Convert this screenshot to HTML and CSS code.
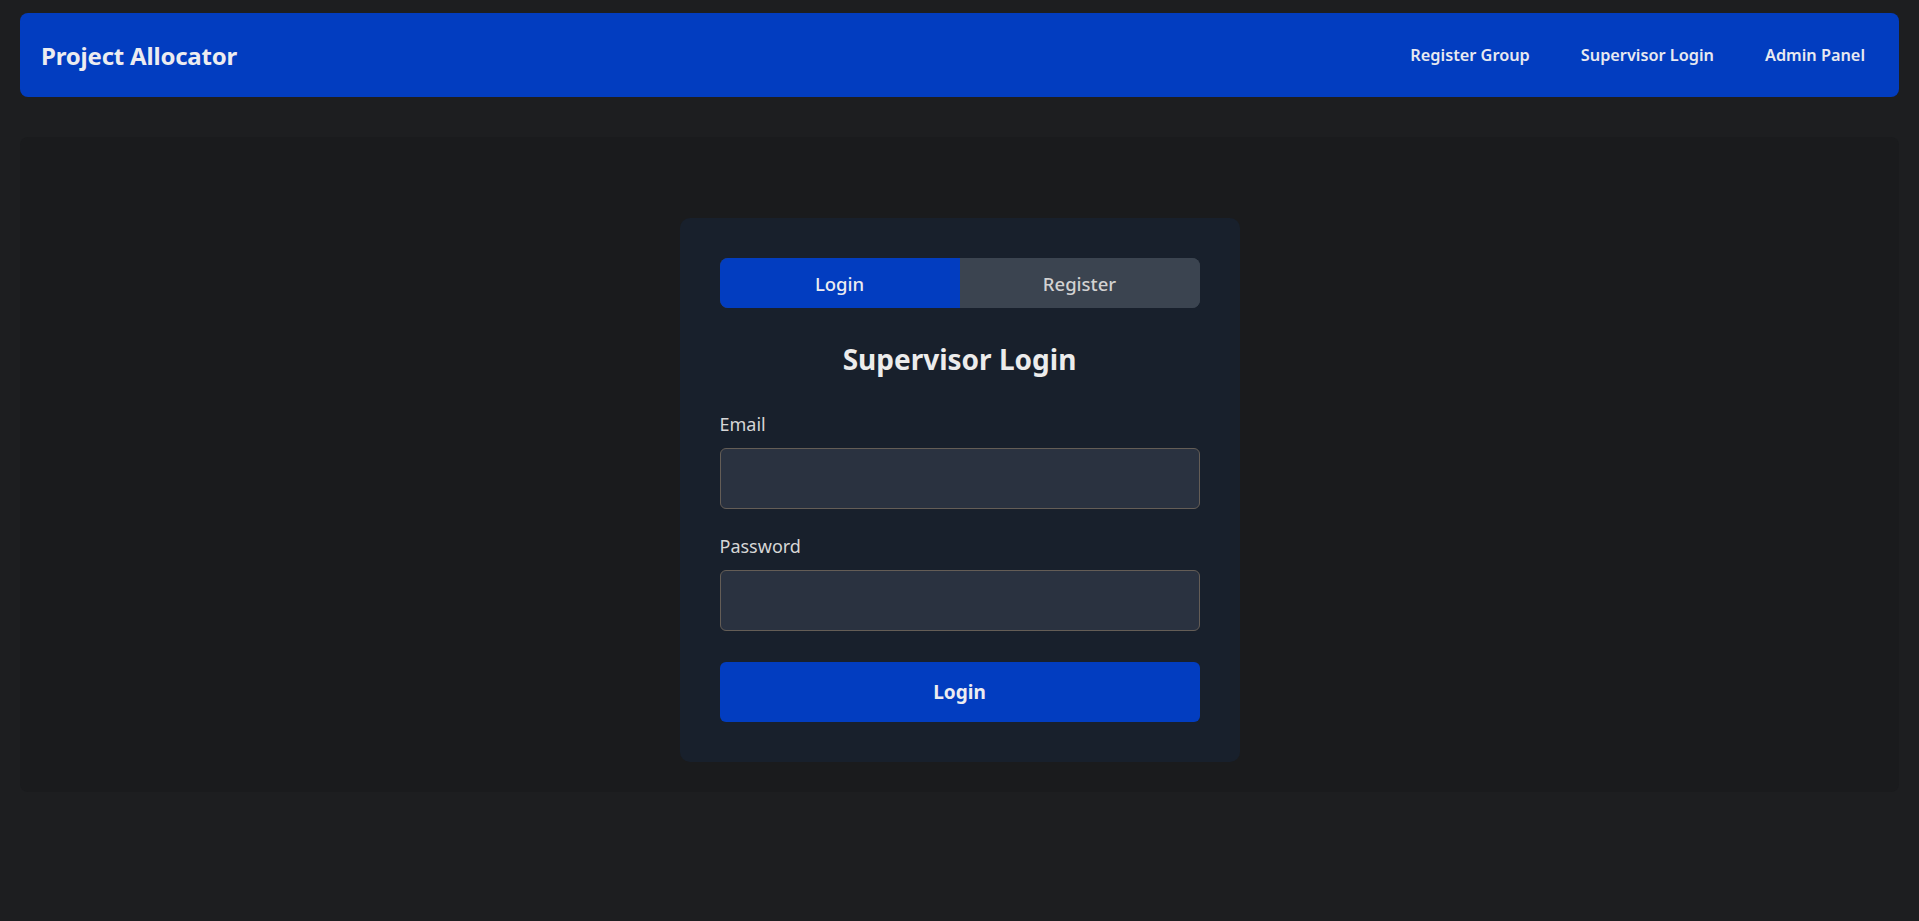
FILE: index.html
```html
<!DOCTYPE html>
<html lang="en">
<head>
<meta charset="utf-8">
<title>Project Allocator</title>
<link rel="stylesheet" href="styles.css">
</head>
<body>
<nav class="navbar">
  <a class="brand" href="#">Project Allocator</a>
  <ul class="nav-links">
    <li><a href="#">Register Group</a></li>
    <li><a href="#">Supervisor Login</a></li>
    <li><a href="#">Admin Panel</a></li>
  </ul>
</nav>
<main class="container">
  <section class="card">
    <div class="tabs">
      <button class="tab active" type="button">Login</button>
      <button class="tab" type="button">Register</button>
    </div>
    <h2 class="title">Supervisor Login</h2>
    <form class="form">
      <div class="field">
        <label for="email">Email</label>
        <input id="email" type="email">
      </div>
      <div class="field">
        <label for="password">Password</label>
        <input id="password" type="password">
      </div>
      <button class="submit" type="button">Login</button>
    </form>
  </section>
</main>
</body>
</html>
```

FILE: styles.css
```css
* { box-sizing: border-box; }

html, body {
  margin: 0;
  padding: 0;
}

body {
  background: #1d1e20;
  color: #e6e6e6;
  font-family: "Segoe UI", "Noto Sans", "Open Sans", sans-serif;
  padding: 13px 20px 0;
}

.navbar {
  display: flex;
  align-items: center;
  justify-content: space-between;
  height: 84px;
  background: #023dc0;
  border-radius: 8px;
  padding: 0 17px 0 21px;
}

.brand {
  color: #ececf0;
  font-size: 24px;
  font-weight: 700;
  text-decoration: none;
  letter-spacing: -0.2px;
}

.nav-links {
  list-style: none;
  display: flex;
  gap: 17px;
  margin: 0;
  padding: 0;
}

.nav-links a {
  display: block;
  padding: 8px 17px;
  color: #e8e9f0;
  font-size: 16.3px;
  font-weight: 600;
  text-decoration: none;
}

.container {
  margin-top: 40px;
  background: #1a1b1d;
  border-radius: 8px;
  padding: 81px 0 30px;
}

.card {
  width: 560px;
  margin: 0 auto;
  background: #18202c;
  border-radius: 10px;
  padding: 40px;
}

.tabs {
  display: flex;
  height: 50px;
  border-radius: 8px;
  overflow: hidden;
  background: #3b4450;
}

.tab {
  flex: 1;
  border: 0;
  background: #3b4450;
  color: #d2d2d2;
  font-family: inherit;
  font-size: 18.5px;
  font-weight: 500;
  cursor: pointer;
}

.tab.active {
  background: #023dc0;
  color: #ececf0;
}

.title {
  margin: 33px 0 0;
  text-align: center;
  font-size: 28px;
  line-height: 36px;
  font-weight: 700;
  color: #ececec;
}

.form {
  margin-top: 35px;
}

.field + .field {
  margin-top: 25px;
}

.field label {
  display: block;
  font-size: 18px;
  line-height: 24px;
  color: #d6d6d6;
  margin-bottom: 12px;
}

.field input {
  display: block;
  width: 100%;
  height: 61px;
  background: #2a3240;
  border: 1px solid #645d56;
  border-radius: 6px;
  color: #e6e6e6;
  font-family: inherit;
  font-size: 18px;
  padding: 0 14px;
  outline: none;
}

.submit {
  display: block;
  width: 100%;
  height: 60px;
  margin-top: 31px;
  border: 0;
  border-radius: 6px;
  background: #023dc0;
  color: #ececf0;
  font-family: inherit;
  font-size: 19px;
  font-weight: 700;
  cursor: pointer;
}
```
